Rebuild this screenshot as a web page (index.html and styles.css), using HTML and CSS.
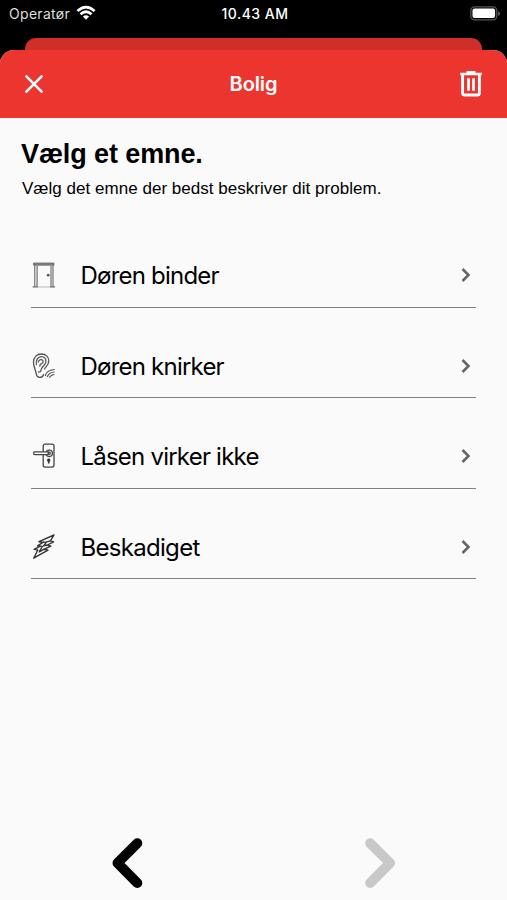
FILE: index.html
```html
<!DOCTYPE html>
<html lang="da">
<head>
<meta charset="utf-8">
<title>Bolig</title>
<link rel="stylesheet" href="styles.css">
</head>
<body>
<div class="status">
  <div class="carrier"><span class="carrier-name">Operatør</span>
    <svg class="wifi" width="20" height="16" viewBox="0 0 20 16"><g fill="none" stroke="#fff" stroke-width="2.7"><path d="M1.4 6.1Q10-1.8 18.6 6.1"/><path d="M4.5 9.2Q10 4.3 15.5 9.2"/></g><path d="M6.9 11.5Q10 8.8 13.1 11.5L10 14.7Z" fill="#fff"/></svg>
  </div>
  <span class="time">10.43 AM</span>
  <svg class="battery" width="31" height="15" viewBox="0 0 31 15"><rect x=".8" y=".8" width="26" height="13" rx="3.8" fill="none" stroke="#555" stroke-width="1.3"/><rect x="2.5" y="2.5" width="22.6" height="9.6" rx="2" fill="#fff"/><path d="M28.2 5v5Q30 9 30 7.5T28.2 5Z" fill="#666"/></svg>
</div>
<div class="back-sheet"></div>
<main class="sheet">
  <header class="bar">
    <svg width="20" height="20" viewBox="0 0 20 20"><path d="M2.4 2.4l15.2 15.2M17.6 2.4l-15.2 15.2" stroke="#fff" stroke-width="2.6" stroke-linecap="round"/></svg>
    <span class="title">Bolig</span>
    <svg width="24" height="28" viewBox="0 0 24 28"><g fill="none" stroke="#fff"><path d="M1.2 4h21.6" stroke-width="2.7"/><path d="M7.5 2.2h9" stroke-width="2.2"/><path d="M3.6 4v19q0 2 2 2h12.8q2 0 2-2V4" stroke-width="2.9"/><path d="M9.5 8.3v12.5M14.5 8.3v12.5" stroke-width="2.8"/></g></svg>
  </header>
  <section class="intro">
    <h1><span class="heading">Vælg et emne.</span></h1>
    <p><span class="lead">Vælg det emne der bedst beskriver dit problem.</span></p>
  </section>
  <ul class="topics">
    <li>
      <svg class="icon" viewBox="0 0 28 28"><g fill="none" stroke="#666"><path d="M3.6 2.1h20.3v2H3.6z" fill="#888" stroke-width="1"/><path d="M4.8 4v21.5M7.1 5v20.5M21 5v20.5M23 4v21.5" stroke-width="1.1"/><path d="M2.7 25.9h5.2M20 25.9h5" stroke-width="1.3"/><path d="M8 26h12" stroke="#aaa" stroke-width=".8"/></g><circle cx="18.2" cy="14.2" r="1.4" fill="#555"/></svg>
      <span class="label">Døren binder</span>
      <svg class="chev" viewBox="0 0 12 18"><path d="M2.5 3l6 6-6 6"/></svg>
    </li>
    <li>
      <svg class="icon" viewBox="0 0 28 28"><g fill="none" stroke="#555" stroke-width="1.3" stroke-linecap="round"><path d="M13.6 22.5C12.2 26.6 6.8 26.4 6.2 21.7C5.7 17.6 3.4 15.5 3.5 10C3.6 5 7 2 11.3 2C16 2 19 5.2 18.8 9.3C18.6 13.2 15.7 14.5 14.5 17"/><path d="M6.4 12.5C5.6 8 8 4.6 11.3 4.6C14.5 4.6 16.4 7 15.9 10C15.4 13 12.8 13.8 11.6 16.5C10.7 18.5 11 20.6 8.5 19.8"/><path d="M8.3 10C8.6 7.4 13 6.5 13.2 9.7C13.2 12 9.6 11.3 9.8 14.1"/><path d="M15.4 23.7q.7-5.2 8.8-6.2M17.5 24.7q.8-3.9 6.6-4.7M19.7 25.4q.8-2.3 4.2-2.9" stroke-width="1.2"/></g></svg>
      <span class="label">Døren knirker</span>
      <svg class="chev" viewBox="0 0 12 18"><path d="M2.5 3l6 6-6 6"/></svg>
    </li>
    <li class="lock">
      <svg class="icon" viewBox="0 0 28 28"><g fill="#fafafa" stroke="#444" stroke-width="1.3"><rect x="13.2" y="2.1" width="10.8" height="23" rx="2"/><circle cx="19.2" cy="11.3" r="3.2"/><path d="M18.8 9.8H4.8q-1.2 0-1.2 1.4t1.2 1.4h14"/><circle cx="19.2" cy="11.3" r="1.1"/></g><path d="M18.7 16.6a1.7 1.7 0 0 1 .8 3.2v1.8h-1.6v-1.8a1.7 1.7 0 0 1 .8-3.2z" fill="#333"/></svg>
      <span class="label">Låsen virker ikke</span>
      <svg class="chev" viewBox="0 0 12 18"><path d="M2.5 3l6 6-6 6"/></svg>
    </li>
    <li class="damage">
      <svg class="icon" viewBox="0 0 28 28"><g fill="none" stroke="#333" stroke-width="1.4" stroke-linejoin="round"><path d="M24 2L9 8.7L13.3 9.2L7.5 12.8L10.3 13.2L4.2 16.4L7.8 17L3.7 25.2L18 17.2L14.2 16.2L20.8 13.2L17.4 12L23.6 8.8L20.4 7.8Z"/><path d="M13.3 9.2l3.4-.3-3.2 4 3.9-.9M10.3 13.2l2 .3-3 5.3 4.9-2.6M20.4 7.8l-3.7 1.1"/></g></svg>
      <span class="label">Beskadiget</span>
      <svg class="chev" viewBox="0 0 12 18"><path d="M2.5 3l6 6-6 6"/></svg>
    </li>
  </ul>
  <nav class="pager">
    <svg width="32" height="52" viewBox="0 0 32 52"><path d="M26.3 6.2L6.5 26l19.8 20" stroke="#000"/></svg>
    <svg width="32" height="52" viewBox="0 0 32 52"><path d="M6.2 6.2L26 26L6.2 46" stroke="#c8c8c8"/></svg>
  </nav>
</main>
</body>
</html>
```
FILE: styles.css
```css
* { box-sizing: border-box; }
body {
  margin: 0;
  width: 507px;
  height: 900px;
  overflow: hidden;
  display: flex;
  flex-direction: column;
  background: #000;
  color: #000;
  font-family: Inter, "Liberation Sans", sans-serif;
}
svg { display: block; flex: none; }
.status {
  height: 38px;
  padding: 0 6px 10px 9px;
  display: grid;
  grid-template-columns: 1fr auto 1fr;
  align-items: center;
  color: #fff;
  font-size: 14px;
}
.carrier { display: flex; align-items: center; gap: 6px; color: #ddd; }
.carrier-name { letter-spacing: .3px; margin-top: -2px; }
.wifi { margin-top: -2px; }
.time { font-weight: 500; letter-spacing: .5px; margin-top: -2px; }
.battery { justify-self: end; margin-top: -2px; }
.back-sheet {
  height: 12px;
  margin: 0 25px;
  background: #d02e28;
  border-radius: 11px 11px 0 0;
}
.sheet {
  flex: 1;
  display: flex;
  flex-direction: column;
  background: #fafafa;
  border-radius: 14px 14px 0 0;
  overflow: hidden;
}
.bar {
  height: 68px;
  padding: 0 24px;
  display: grid;
  grid-template-columns: 1fr auto 1fr;
  align-items: center;
  background: #ec352f;
  color: #fff;
}
.bar svg:last-child { justify-self: end; }
.title { font-size: 20px; font-weight: 600; letter-spacing: -.1px; }
.intro {
  height: 99.5px;
  padding: 20px 21px 0;
  font-family: "Liberation Sans", Arial, sans-serif;
}
h1 { margin: 0; font-size: 27px; line-height: 32px; letter-spacing: -.1px; }
p { margin: 9px 0 0 1px; font-size: 17px; line-height: 20px; letter-spacing: .03px; }
.topics { margin: 0 31px; padding: 0; list-style: none; }
.topics li {
  height: 90.4px;
  padding-top: 26px;
  display: flex;
  align-items: center;
  border-bottom: 1px solid #808080;
}
.topics .lock, .topics .damage { padding-top: 27px; }
.icon { width: 28px; height: 28px; margin-left: -1px; }
.label { flex: 1; margin: 1px 0 0 22.5px; font-size: 24px; letter-spacing: -.78px; white-space: nowrap; }
.damage .label { letter-spacing: -.7px; }
.chev { width: 12px; height: 18px; margin-right: 4px; }
.chev path { fill: none; stroke: #666; stroke-width: 2.6; }
.pager {
  margin: auto 111px 11px;
  display: flex;
  justify-content: space-between;
}
.pager path { fill: none; stroke-width: 10; stroke-linecap: round; stroke-linejoin: round; }
```
